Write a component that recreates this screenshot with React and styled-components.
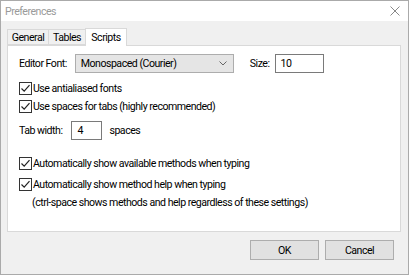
import styled, { createGlobalStyle } from 'styled-components'

const GlobalStyle = createGlobalStyle`
  html, body {
    margin: 0;
    padding: 0;
    background: #ffffff;
  }
  body {
    font-family: 'Roboto', 'Liberation Sans', sans-serif;
    font-size: 10.6px;
    letter-spacing: -0.5px;
    color: #000000;
  }
`

const Window = styled.div`
  box-sizing: border-box;
  width: 409px;
  height: 275px;
  border: 1px solid #aaaaaa;
  background: #f0f0f0;
  display: flex;
  flex-direction: column;
  overflow: hidden;
`

const TitleBar = styled.div`
  height: 20px;
  background: #ffffff;
  display: flex;
  align-items: center;
  justify-content: space-between;
  padding: 0 8px 0 4px;
  color: #9a9a9a;
`

const Close = styled.svg`
  width: 10px;
  height: 10px;
`

const Body = styled.div`
  flex: 1;
  display: flex;
  flex-direction: column;
  padding: 7px 7px 0 6px;
`

const TabRow = styled.div`
  display: flex;
  align-items: flex-end;
  height: 17px;
  padding-left: 1px;
  position: relative;
  z-index: 1;
`

const Tab = styled.div`
  box-sizing: border-box;
  width: ${({ w }) => w}px;
  height: ${({ active }) => (active ? '18px' : '16px')};
  margin-bottom: ${({ active }) => (active ? '-1px' : '0')};
  display: flex;
  align-items: center;
  justify-content: center;
  background: ${({ active }) => (active ? '#ffffff' : '#f0f0f0')};
  border: 1px solid #d9d9d9;
  border-bottom: ${({ active }) => (active ? 'none' : '1px solid #d9d9d9')};
  margin-left: -1px;
`

const Panel = styled.div`
  box-sizing: border-box;
  height: 187px;
  background: #ffffff;
  border: 1px solid #d9d9d9;
  display: flex;
  flex-direction: column;
  padding: 7px 0 0 11px;
`

const Row = styled.div`
  display: flex;
  align-items: center;
  height: ${({ h }) => h || 18}px;
  margin-top: ${({ mt }) => mt || 0}px;
  padding-left: ${({ indent }) => indent || 0}px;
`

const Label = styled.span`
  margin-right: ${({ mr }) => mr || 0}px;
  white-space: nowrap;
`

const Combo = styled.div`
  box-sizing: border-box;
  width: 159px;
  height: 19px;
  background: #e5e5e5;
  border: 1px solid #adadad;
  display: flex;
  align-items: center;
  justify-content: space-between;
  padding: 0 6px 0 5px;
  margin-right: 16px;
`

const TextBox = styled.div`
  box-sizing: border-box;
  width: ${({ w }) => w}px;
  height: 19px;
  border: 1px solid #7a7a7a;
  background: #ffffff;
  display: flex;
  align-items: center;
  padding-left: 5px;
  margin-right: ${({ mr }) => mr || 0}px;
`

const Box = styled.span`
  box-sizing: border-box;
  width: 13px;
  height: 13px;
  border: 1px solid #333333;
  background: #ffffff;
  display: inline-flex;
  align-items: center;
  justify-content: center;
  margin-right: 1px;
`

const ButtonBar = styled.div`
  display: flex;
  justify-content: flex-end;
  gap: 6px;
  padding: 8px 7px 0 0;
`

const Button = styled.div`
  box-sizing: border-box;
  width: 69px;
  height: 20px;
  background: #e1e1e1;
  border: 1px solid #adadad;
  display: flex;
  align-items: center;
  justify-content: center;
`

function Check({ children, mt }) {
  return (
    <Row mt={mt}>
      <Box>
        <svg width="11" height="11" viewBox="0 0 11 11">
          <path d="M1.5 5.5 L4.2 8.2 L9.5 2.2" fill="none" stroke="#222" strokeWidth="1.2" />
        </svg>
      </Box>
      <Label>{children}</Label>
    </Row>
  )
}

export default function App() {
  return (
    <>
      <GlobalStyle />
      <Window>
        <TitleBar>
          <span>Preferences</span>
          <Close viewBox="0 0 10 10">
            <path d="M0.5 0.5 L9.5 9.5 M9.5 0.5 L0.5 9.5" stroke="#888" strokeWidth="1" />
          </Close>
        </TitleBar>
        <Body>
          <TabRow>
            <Tab w={42}>General</Tab>
            <Tab w={38}>Tables</Tab>
            <Tab w={42} active>Scripts</Tab>
          </TabRow>
          <Panel>
            <Row h={20}>
              <Label mr={8}>Editor Font:</Label>
              <Combo>
                <span>Monospaced (Courier)</span>
                <svg width="8" height="5" viewBox="0 0 8 5">
                  <path d="M0.5 0.5 L4 4 L7.5 0.5" fill="none" stroke="#666" strokeWidth="1" />
                </svg>
              </Combo>
              <Label mr={5}>Size:</Label>
              <TextBox w={49}>10</TextBox>
            </Row>
            <Check mt={6}>Use antialiased fonts</Check>
            <Check mt={0}>Use spaces for tabs (highly recommended)</Check>
            <Row mt={6}>
              <Label mr={9}>Tab width:</Label>
              <TextBox w={31} mr={7}>4</TextBox>
              <Label>spaces</Label>
            </Row>
            <Check mt={15}>Automatically show available methods when typing</Check>
            <Check mt={3}>Automatically show method help when typing</Check>
            <Row mt={0} indent={13}>
              <Label>(ctrl-space shows methods and help regardless of these settings)</Label>
            </Row>
          </Panel>
          <ButtonBar>
            <Button>OK</Button>
            <Button>Cancel</Button>
          </ButtonBar>
        </Body>
      </Window>
    </>
  )
}
